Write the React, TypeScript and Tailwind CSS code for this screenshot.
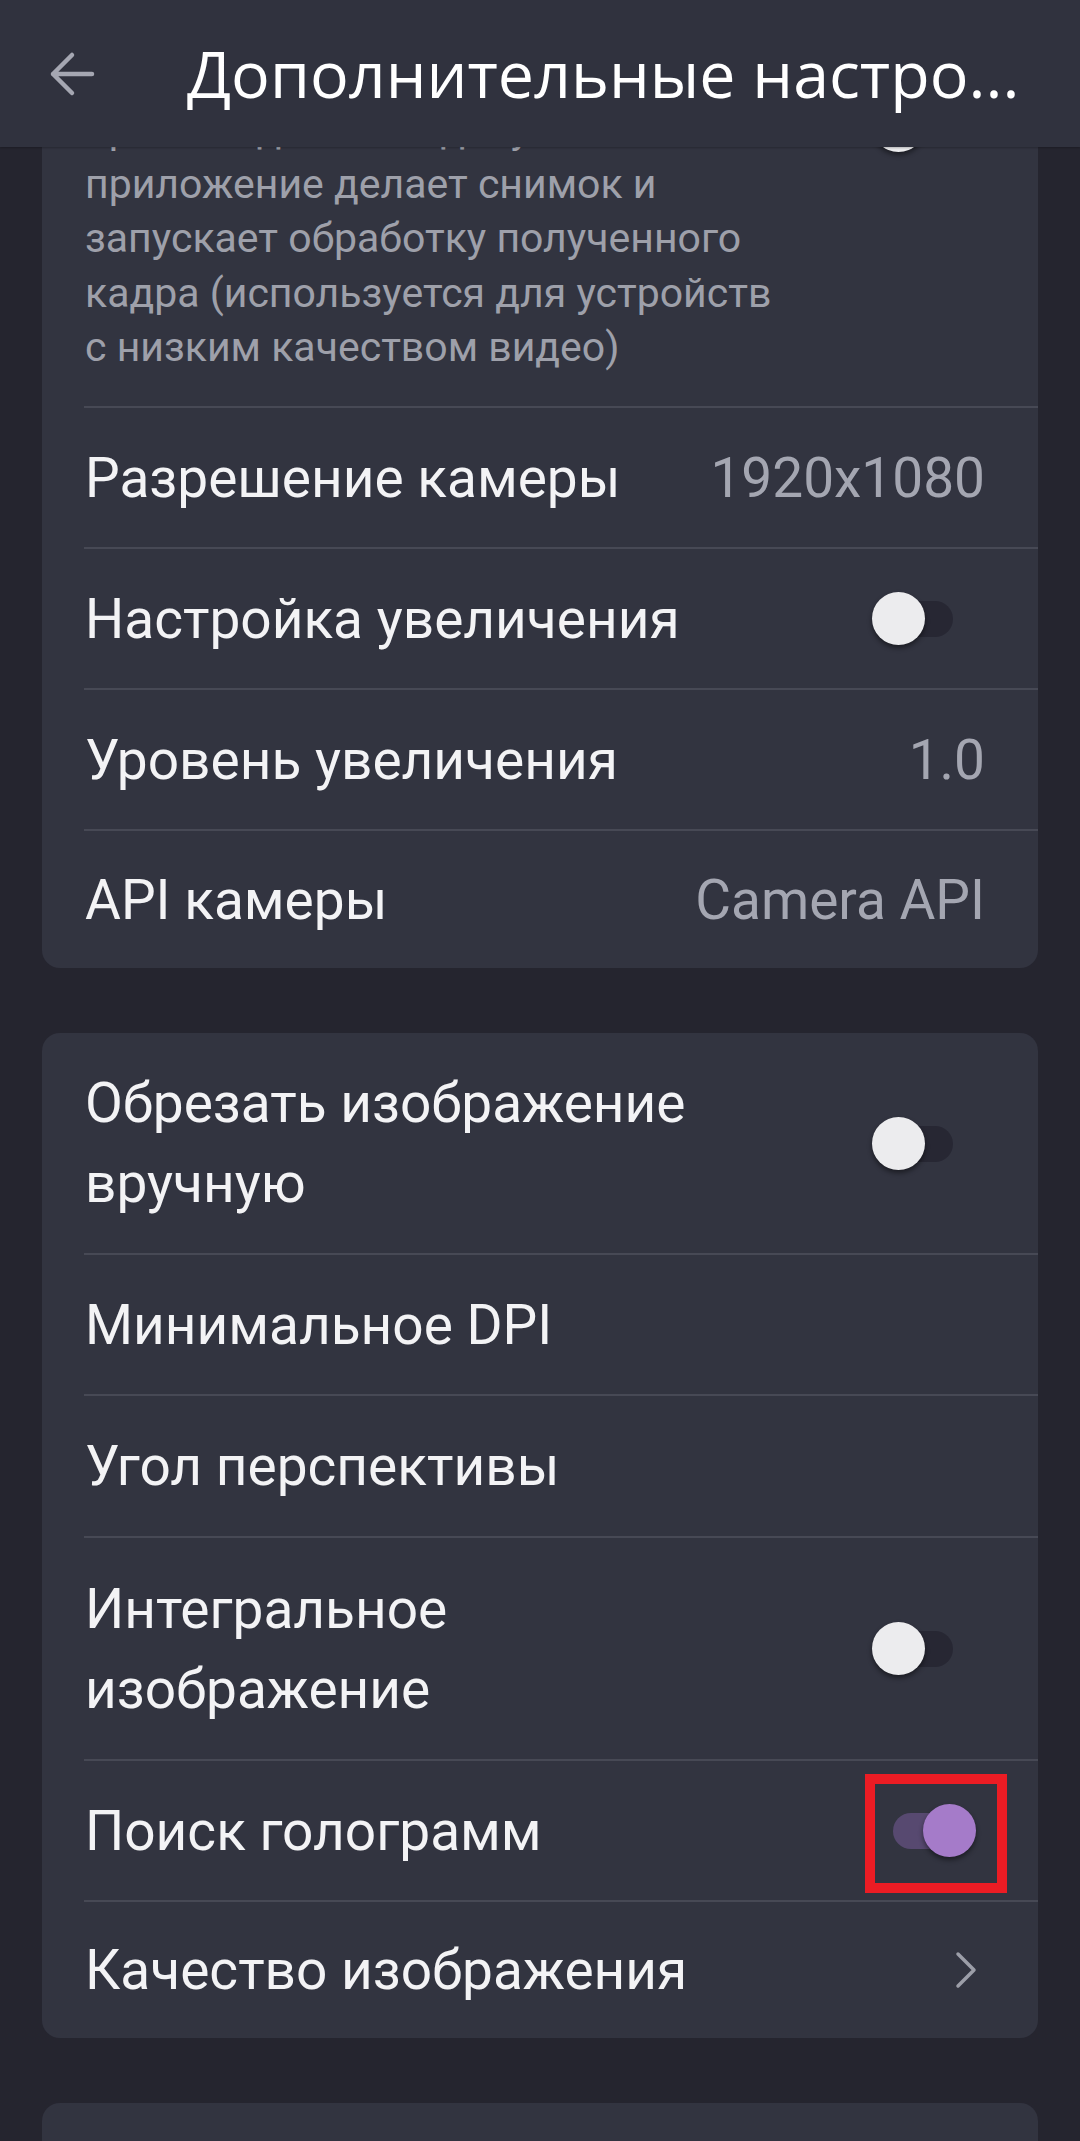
import React from "react";

const Divider = () => <div className="ml-[42px] h-[2px] bg-[#474955]" />;

function Toggle({ on = false, highlight = false }: { on?: boolean; highlight?: boolean }) {
  return (
    <div className="relative mr-[9px] h-[53px] w-[104px] shrink-0">
      <div
        className={
          "absolute left-[21px] top-[9px] h-[36px] w-[60px] rounded-full " +
          (on ? "bg-[#574970]" : "bg-[#272733]")
        }
      />
      <div
        className={
          "absolute top-0 h-[53px] w-[53px] rounded-full shadow-[0_3px_5px_rgba(0,0,0,0.45)] " +
          (on ? "left-[51px] bg-[#a57bc9]" : "left-0 bg-[#ececee]")
        }
      />
      {highlight && (
        <div className="absolute -left-[7px] -top-[30px] h-[119px] w-[142px] border-[10px] border-[#ec1c24]" />
      )}
    </div>
  );
}

function Row({
  label,
  right,
  h = "h-[139px]",
}: {
  label: React.ReactNode;
  right?: React.ReactNode;
  h?: string;
}) {
  return (
    <div className={"flex items-center justify-between pl-[43px] pr-[53px] " + h}>
      <div className="text-[55px] leading-[80px] text-[#f3f3f5]">{label}</div>
      {right}
    </div>
  );
}

const Value = ({ children }: { children: React.ReactNode }) => (
  <div className="text-[55px] leading-[80px] text-[#a4a6b1]">{children}</div>
);

const Chevron = () => (
  <svg width="24" height="38" viewBox="0 0 24 38" className="mr-[7px]">
    <polyline
      points="4,3 20,19 4,35"
      fill="none"
      stroke="#9c9ea8"
      strokeWidth="3.5"
      strokeLinecap="round"
      strokeLinejoin="round"
    />
  </svg>
);

export default function App() {
  return (
    <div
      className="flex h-[2141px] w-[1080px] flex-col overflow-hidden bg-[#25252f]"
      style={{ fontFamily: "Roboto, 'Noto Sans', sans-serif" }}
    >
      {/* App bar */}
      <header className="relative z-10 flex h-[147px] shrink-0 items-center bg-[#30323e] shadow-[0_1px_2px_rgba(0,0,0,0.25)]">
        <svg width="46" height="46" viewBox="0 0 46 46" className="ml-[49px]">
          <path
            d="M4 23 H43 M23 4 L4 23 L23 42"
            fill="none"
            stroke="#a5a7b2"
            strokeWidth="4.5"
            strokeLinecap="round"
            strokeLinejoin="round"
          />
        </svg>
        <div
          className="ml-[92px] whitespace-nowrap text-[64.5px] leading-none text-white"
          style={{ fontFamily: "'Open Sans', 'Noto Sans', sans-serif" }}
        >
          Дополнительные настро...
        </div>
      </header>

      {/* Scrolled content */}
      <main className="flex flex-1 flex-col overflow-hidden px-[42px]">
        {/* Card 1 */}
        <section className="-mt-[303px] shrink-0 rounded-[18px] bg-[#323440]">
          <div className="flex h-[562px] items-center justify-between pl-[43px] pr-[53px]">
            <div className="self-end pb-[31px] text-[41px] leading-[54.6px] text-[#9ea0aa]">
              <div>при наведении на документ</div>
              <div>приложение делает снимок и</div>
              <div>запускает обработку полученного</div>
              <div>кадра (используется для устройств</div>
              <div>с низким качеством видео)</div>
            </div>
            <Toggle />
          </div>
          <Divider />
          <Row label="Разрешение камеры" right={<Value>1920x1080</Value>} />
          <Divider />
          <Row label="Настройка увеличения" right={<Toggle />} />
          <Divider />
          <Row label="Уровень увеличения" right={<Value>1.0</Value>} />
          <Divider />
          <Row label="API камеры" right={<Value>Camera API</Value>} h="h-[137px]" />
        </section>

        {/* Card 2 */}
        <section className="mt-[65px] shrink-0 rounded-[18px] bg-[#323440]">
          <Row
            h="h-[220px]"
            label={
              <>
                Обрезать изображение
                <br />
                вручную
              </>
            }
            right={<Toggle />}
          />
          <Divider />
          <Row label="Минимальное DPI" />
          <Divider />
          <Row label="Угол перспективы" h="h-[140px]" />
          <Divider />
          <Row
            h="h-[221px]"
            label={
              <>
                Интегральное
                <br />
                изображение
              </>
            }
            right={<Toggle />}
          />
          <Divider />
          <Row label="Поиск голограмм" right={<Toggle on highlight />} />
          <Divider />
          <Row label="Качество изображения" right={<Chevron />} h="h-[136px]" />
        </section>

        {/* Card 3 (partially visible) */}
        <section className="mt-[65px] h-[120px] shrink-0 rounded-t-[18px] bg-[#323440]" />
      </main>
    </div>
  );
}
